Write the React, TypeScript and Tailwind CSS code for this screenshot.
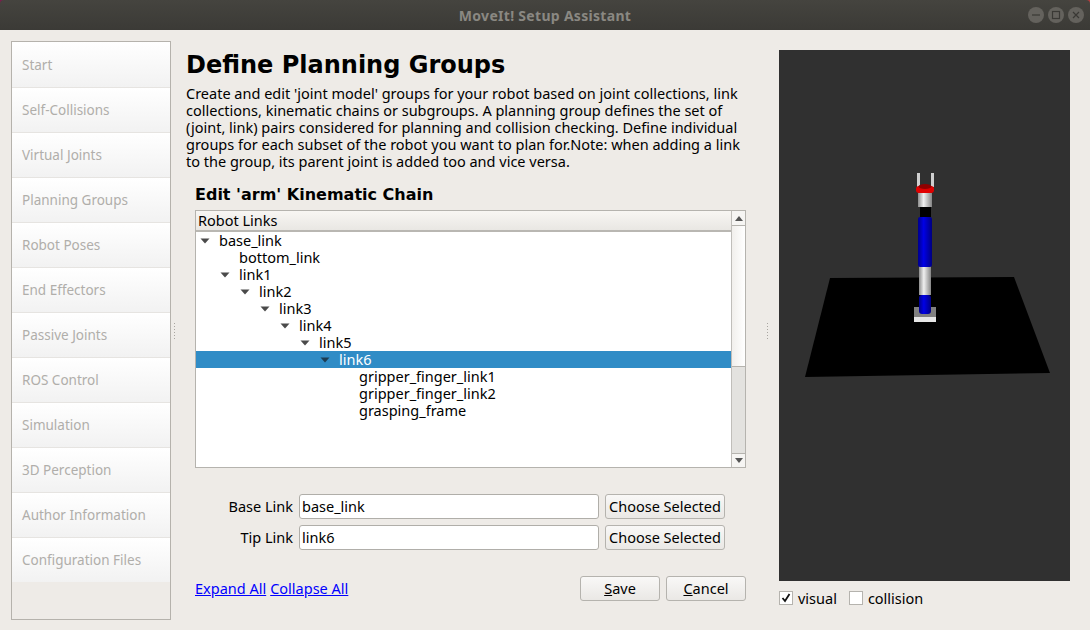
const sidebarItems = [
  'Start',
  'Self-Collisions',
  'Virtual Joints',
  'Planning Groups',
  'Robot Poses',
  'End Effectors',
  'Passive Joints',
  'ROS Control',
  'Simulation',
  '3D Perception',
  'Author Information',
  'Configuration Files',
];

const treeRows = [
  { label: 'base_link', depth: 0, arrow: true },
  { label: 'bottom_link', depth: 1, arrow: false },
  { label: 'link1', depth: 1, arrow: true },
  { label: 'link2', depth: 2, arrow: true },
  { label: 'link3', depth: 3, arrow: true },
  { label: 'link4', depth: 4, arrow: true },
  { label: 'link5', depth: 5, arrow: true },
  { label: 'link6', depth: 6, arrow: true, selected: true },
  { label: 'gripper_finger_link1', depth: 7, arrow: false },
  { label: 'gripper_finger_link2', depth: 7, arrow: false },
  { label: 'grasping_frame', depth: 7, arrow: false },
];

function Splitter() {
  return (
    <div className="flex flex-col gap-[2px]">
      {[0, 1, 2, 3, 4, 5].map((i) => (
        <span key={i} className="h-[1px] w-[1px] bg-[#a8a5a0]" />
      ))}
    </div>
  );
}

function WindowButton({ children }: { children: React.ReactNode }) {
  return (
    <div className="flex h-[16px] w-[16px] items-center justify-center rounded-full bg-[#64625d]">
      <svg width="10" height="10" viewBox="0 0 10 10" fill="none" stroke="#3a3935" strokeWidth="1.2">
        {children}
      </svg>
    </div>
  );
}

function FormRow({ label, value }: { label: string; value: string }) {
  return (
    <div className="flex h-[25px] items-center">
      <span className="w-[98px] text-right">{label}</span>
      <div className="ml-[6px] flex h-[25px] w-[300px] items-center rounded-[3px] border border-[#b0aea9] bg-white pl-[2px]">
        {value}
      </div>
      <button className="ml-[6px] h-[25px] w-[120px] rounded-[3px] border border-[#b5b3ae] bg-gradient-to-b from-[#f9f8f7] to-[#eae8e5] text-center">
        Choose Selected
      </button>
    </div>
  );
}

function RobotView() {
  return (
    <svg viewBox="0 0 291 531" className="h-[531px] w-[291px] bg-[#303030]">
      <defs>
        <linearGradient id="blue" x1="0" x2="1" y1="0" y2="0">
          <stop offset="0" stopColor="#00008a" />
          <stop offset="0.4" stopColor="#0000e6" />
          <stop offset="1" stopColor="#000080" />
        </linearGradient>
        <linearGradient id="grey" x1="0" x2="1" y1="0" y2="0">
          <stop offset="0" stopColor="#8c8c8c" />
          <stop offset="0.4" stopColor="#f0f0f0" />
          <stop offset="1" stopColor="#858585" />
        </linearGradient>
      </defs>
      <polygon points="51,228 235,227 271,323 26,327" fill="#000000" />
      {/* base plate */}
      <rect x="135" y="257" width="22" height="10" fill="#808080" />
      <rect x="135" y="267" width="22" height="5" fill="#e6e6e6" />
      {/* arm segments, bottom to top */}
      <rect x="140" y="245" width="12" height="19" rx="3" fill="url(#blue)" />
      <rect x="140" y="216" width="12" height="29" fill="url(#grey)" />
      <rect x="139" y="167" width="14" height="50" rx="2" fill="url(#blue)" />
      <rect x="141" y="157" width="11" height="10" fill="#000000" />
      <rect x="139" y="143" width="14" height="14" fill="url(#grey)" />
      {/* gripper */}
      <rect x="138" y="123" width="3" height="14" fill="#cfcfcf" />
      <rect x="152" y="123" width="3" height="14" fill="#cfcfcf" />
      <rect x="137" y="136" width="18" height="7" rx="3" fill="#e00000" />
      <ellipse cx="146" cy="136.5" rx="6.5" ry="2.5" fill="#8f0000" />
    </svg>
  );
}

export default function App() {
  return (
    <div className="flex h-[630px] w-[1090px] flex-col overflow-hidden bg-[#eeebe7] font-['Noto_Sans',sans-serif] text-[14.5px] leading-[17px] text-black">
      {/* title bar, wallpaper shows in the rounded corners */}
      <div className="h-[30px] shrink-0 bg-gradient-to-r from-[#7a1d4c] to-[#b83c3c]">
        <div className="flex h-[30px] items-center rounded-t-[4px] bg-gradient-to-b from-[#45443f] to-[#3b3a36] pr-[6px]">
          <div className="flex-1 pl-[62px] text-center text-[14px] font-bold tracking-[0.3px] text-[#8a8882]">
            MoveIt! Setup Assistant
          </div>
          <div className="flex gap-[4px]">
            <WindowButton>
              <path d="M1 5h8" />
            </WindowButton>
            <WindowButton>
              <rect x="1.5" y="1.5" width="7" height="7" />
            </WindowButton>
            <WindowButton>
              <path d="M2 2l6 6M8 2l-6 6" />
            </WindowButton>
          </div>
        </div>
      </div>

      <div className="flex flex-1 pl-[11px] pt-[11px]">
        {/* sidebar */}
        <div className="flex h-[579px] w-[160px] shrink-0 flex-col border border-[#b5b2ac] bg-[#eeebe7]">
          {sidebarItems.map((item) => (
            <div
              key={item}
              className="flex h-[45px] shrink-0 items-center border-t border-[#e6e4e1] bg-gradient-to-b from-white to-[#f2f2f2] pl-[10px] text-[13.5px] text-[#b0aeaa] first:border-t-0 first:pt-[2px]"
            >
              {item}
            </div>
          ))}
        </div>

        <div className="flex h-[579px] w-[15px] shrink-0 items-center pl-[3px]">
          <Splitter />
        </div>

        {/* main column */}
        <div className="flex w-[574px] shrink-0 flex-col">
          <h1 className="mt-[8px] h-[32px] font-['DejaVu_Sans',sans-serif] text-[24px] font-bold leading-[32px]">
            Define Planning Groups
          </h1>
          <p className="mt-[4px] w-[570px]">
            Create and edit 'joint model' groups for your robot based on joint collections, link
            <br />
            collections, kinematic chains or subgroups. A planning group defines the set of
            <br />
            (joint, link) pairs considered for planning and collision checking. Define individual
            <br />
            groups for each subset of the robot you want to plan for.Note: when adding a link
            <br />
            to the group, its parent joint is added too and vice versa.
          </p>
          <div className="ml-[9px] mt-[15px] flex w-[551px] flex-col">
            <h2 className="h-[20px] font-['DejaVu_Sans',sans-serif] text-[16px] font-bold leading-[20px]">
              Edit 'arm' Kinematic Chain
            </h2>

            {/* tree */}
            <div className="mt-[5px] flex h-[258px] border border-[#b5b3ae] bg-white">
              <div className="flex flex-1 flex-col">
                <div className="flex h-[21px] items-center border-b-2 border-[#b9b7b2] bg-gradient-to-b from-[#f8f6f3] to-[#e9e7e3] pl-[2px]">
                  Robot Links
                </div>
                {treeRows.map((row) => (
                  <div
                    key={row.label}
                    className={`flex h-[17px] items-center ${row.selected ? 'bg-[#308cc6] text-white' : ''}`}
                    style={{ paddingLeft: row.depth * 20 + 4 }}
                  >
                    <span className="flex w-[19px] shrink-0">
                      {row.arrow && (
                        <svg width="10" height="6" viewBox="0 0 10 6">
                          <polygon points="0.5,0.5 9.5,0.5 5,5.5" fill={row.selected ? '#1c3d54' : '#4a4a4a'} />
                        </svg>
                      )}
                    </span>
                    <span>{row.label}</span>
                  </div>
                ))}
              </div>

              {/* scrollbar */}
              <div className="flex w-[14px] shrink-0 flex-col border-l border-[#c0beba]">
                <div className="flex h-[15px] items-center justify-center border-b border-[#b5b3ae] bg-[#f6f5f3]">
                  <svg width="8" height="5" viewBox="0 0 8 5">
                    <polygon points="0,5 8,5 4,0" fill="#555555" />
                  </svg>
                </div>
                <div className="h-[140px] bg-gradient-to-r from-[#f1efec] to-white" />
                <div className="flex-1 border-t border-[#b5b3ae] bg-[#e3e2df]" />
                <div className="flex h-[14px] items-center justify-center border-t border-[#b5b3ae] bg-[#f6f5f3]">
                  <svg width="8" height="5" viewBox="0 0 8 5">
                    <polygon points="0,0 8,0 4,5" fill="#555555" />
                  </svg>
                </div>
              </div>
            </div>

            <div className="mt-[26px] flex flex-col gap-[6px]">
              <FormRow label="Base Link" value="base_link" />
              <FormRow label="Tip Link" value="link6" />
            </div>

            <div className="mt-[26px] flex h-[25px] items-center">
              <a className="text-[#0000ff] underline">Expand All</a>
              <a className="ml-[4px] text-[#0000ff] underline">Collapse All</a>
              <div className="ml-auto flex gap-[6px]">
                <button className="h-[25px] w-[80px] rounded-[3px] border border-[#b5b3ae] bg-gradient-to-b from-[#f9f8f7] to-[#eae8e5]">
                  <span className="underline">S</span>ave
                </button>
                <button className="h-[25px] w-[80px] rounded-[3px] border border-[#b5b3ae] bg-gradient-to-b from-[#f9f8f7] to-[#eae8e5]">
                  <span className="underline">C</span>ancel
                </button>
              </div>
            </div>
          </div>
        </div>

        <div className="flex h-[579px] w-[19px] shrink-0 items-center pl-[7px]">
          <Splitter />
        </div>

        {/* 3D view */}
        <div className="flex w-[291px] shrink-0 flex-col pt-[9px]">
          <RobotView />
          <div className="mt-[9px] flex h-[16px] items-center">
            <span className="flex h-[14px] w-[14px] items-center justify-center border border-[#b5b3ae] bg-white">
              <svg width="10" height="10" viewBox="0 0 10 10" fill="none" stroke="#111111" strokeWidth="1.8">
                <path d="M1.5 5l2.5 3 4.5-7" />
              </svg>
            </span>
            <span className="ml-[5px]">visual</span>
            <span className="ml-[12px] h-[14px] w-[14px] border border-[#b5b3ae] bg-white" />
            <span className="ml-[5px]">collision</span>
          </div>
        </div>
      </div>
    </div>
  );
}
